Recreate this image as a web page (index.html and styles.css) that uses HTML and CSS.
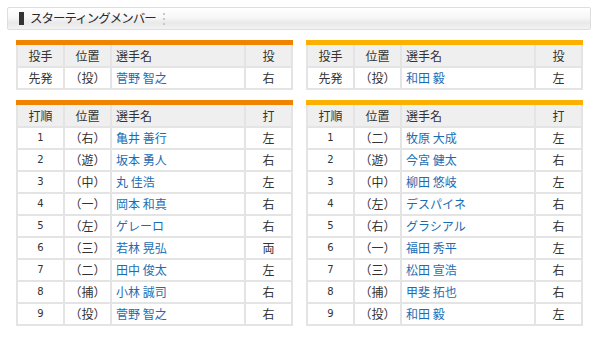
FILE: index.html
```html
<!DOCTYPE html>
<html lang="ja">
<head>
<meta charset="utf-8">
<link rel="stylesheet" href="styles.css">
</head>
<body>
<div class="page">
  <div class="title-bar">
    <span class="mark"></span>
    <h2 class="title">スターティングメンバー</h2>
    <span class="dots"><i></i><i></i><i></i></span>
  </div>
  <div class="columns">
    <div class="team home">
      <table class="lineup">
        <tr><th class="c1">投手</th><th class="c2">位置</th><th class="c3">選手名</th><th class="c4">投</th></tr>
        <tr><td>先発</td><td>（投）</td><td class="name"><a>菅野 智之</a></td><td>右</td></tr>
      </table>
      <table class="lineup">
        <tr><th class="c1">打順</th><th class="c2">位置</th><th class="c3">選手名</th><th class="c4">打</th></tr>
        <tr><td class="num">1</td><td>（右）</td><td class="name"><a>亀井 善行</a></td><td>左</td></tr>
        <tr><td class="num">2</td><td>（遊）</td><td class="name"><a>坂本 勇人</a></td><td>右</td></tr>
        <tr><td class="num">3</td><td>（中）</td><td class="name"><a>丸 佳浩</a></td><td>左</td></tr>
        <tr><td class="num">4</td><td>（一）</td><td class="name"><a>岡本 和真</a></td><td>右</td></tr>
        <tr><td class="num">5</td><td>（左）</td><td class="name"><a>ゲレーロ</a></td><td>右</td></tr>
        <tr><td class="num">6</td><td>（三）</td><td class="name"><a>若林 晃弘</a></td><td>両</td></tr>
        <tr><td class="num">7</td><td>（二）</td><td class="name"><a>田中 俊太</a></td><td>左</td></tr>
        <tr><td class="num">8</td><td>（捕）</td><td class="name"><a>小林 誠司</a></td><td>右</td></tr>
        <tr><td class="num">9</td><td>（投）</td><td class="name"><a>菅野 智之</a></td><td>右</td></tr>
      </table>
    </div>
    <div class="team away">
      <table class="lineup">
        <tr><th class="c1">投手</th><th class="c2">位置</th><th class="c3">選手名</th><th class="c4">投</th></tr>
        <tr><td>先発</td><td>（投）</td><td class="name"><a>和田 毅</a></td><td>左</td></tr>
      </table>
      <table class="lineup">
        <tr><th class="c1">打順</th><th class="c2">位置</th><th class="c3">選手名</th><th class="c4">打</th></tr>
        <tr><td class="num">1</td><td>（二）</td><td class="name"><a>牧原 大成</a></td><td>左</td></tr>
        <tr><td class="num">2</td><td>（遊）</td><td class="name"><a>今宮 健太</a></td><td>右</td></tr>
        <tr><td class="num">3</td><td>（中）</td><td class="name"><a>柳田 悠岐</a></td><td>左</td></tr>
        <tr><td class="num">4</td><td>（左）</td><td class="name"><a>デスパイネ</a></td><td>右</td></tr>
        <tr><td class="num">5</td><td>（右）</td><td class="name"><a>グラシアル</a></td><td>右</td></tr>
        <tr><td class="num">6</td><td>（一）</td><td class="name"><a>福田 秀平</a></td><td>左</td></tr>
        <tr><td class="num">7</td><td>（三）</td><td class="name"><a>松田 宣浩</a></td><td>右</td></tr>
        <tr><td class="num">8</td><td>（捕）</td><td class="name"><a>甲斐 拓也</a></td><td>右</td></tr>
        <tr><td class="num">9</td><td>（投）</td><td class="name"><a>和田 毅</a></td><td>左</td></tr>
      </table>
    </div>
  </div>
</div>
</body>
</html>
```
FILE: styles.css
```css
html, body {
  margin: 0;
  padding: 0;
  background: #fff;
}
body {
  font-family: "Noto Sans CJK JP", "Noto Sans", sans-serif;
  font-size: 12px;
  color: #333;
}
.page {
  padding: 7px 9px 0 7px;
}
.title-bar {
  display: flex;
  align-items: center;
  border: 1px solid #dedede;
  border-radius: 2px;
  background: linear-gradient(#ffffff 0%, #f7f7f7 45%, #e9e9e9 70%, #f2f2f2 100%);
  padding-left: 11px;
  box-sizing: border-box;
  height: 23px;
}
.mark {
  width: 5px;
  height: 13px;
  background: #333;
  margin-right: 6px;
}
.title {
  margin: 0;
  font-size: 12.5px;
  font-weight: normal;
  letter-spacing: -1px;
  color: #2a2a2a;
  line-height: 1;
}
.dots {
  display: flex;
  flex-direction: column;
  gap: 3px;
  margin-left: 7px;
}
.dots i {
  display: block;
  width: 2px;
  height: 2px;
  background: #c8c8c8;
}
.columns {
  display: flex;
  gap: 13px;
  margin-top: 10px;
  padding-left: 9px;
}
.team {
  width: 277px;
  flex: none;
}
.lineup {
  width: 277px;
  border-collapse: collapse;
  table-layout: fixed;
  margin-bottom: 10px;
}
.home .lineup { border-top: 5px solid #f08300; }
.away .lineup { border-top: 5px solid #fcb100; }
.lineup th, .lineup td {
  border: 2px solid #e4e4e4;
  height: 20px;
  padding: 0;
  text-align: center;
  font-weight: normal;
  line-height: 18px;
  color: #333;
}
.lineup tr:first-child th { border-top: 0; height: 21px; }
.lineup th { background: #efefef; }
.c1 { width: 45px; }
.c2 { width: 45px; }
.c3 { width: 128px; }
.lineup th.c3,
.lineup td.name {
  text-align: left;
  padding-left: 4px;
}
.name a {
  color: #1b6db3;
  text-decoration: none;
}
.num {
  font-family: "DejaVu Sans", sans-serif;
  font-size: 10px;
  color: #444;
}
```
